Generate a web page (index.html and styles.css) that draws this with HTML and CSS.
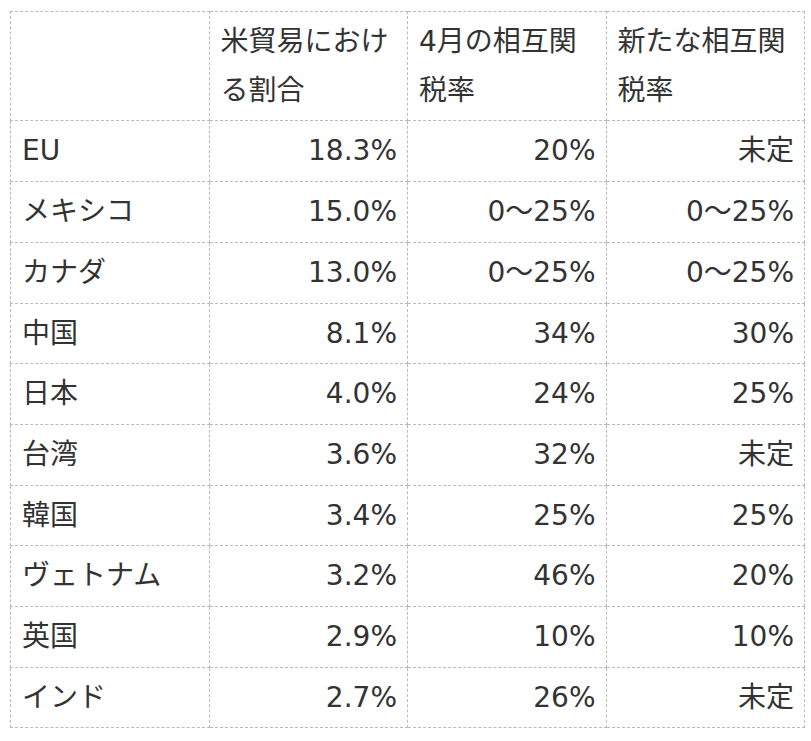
FILE: index.html
```html
<!DOCTYPE html>
<html lang="ja">
<head>
<meta charset="utf-8">
<link rel="stylesheet" href="styles.css">
</head>
<body>
<table class="tariff">
<thead>
<tr><th></th><th>米貿易における割合</th><th>4月の相互関税率</th><th>新たな相互関税率</th></tr>
</thead>
<tbody>
<tr><td>EU</td><td class="num">18.3%</td><td class="num">20%</td><td class="num">未定</td></tr>
<tr><td>メキシコ</td><td class="num">15.0%</td><td class="num">0～25%</td><td class="num">0～25%</td></tr>
<tr><td>カナダ</td><td class="num">13.0%</td><td class="num">0～25%</td><td class="num">0～25%</td></tr>
<tr><td>中国</td><td class="num">8.1%</td><td class="num">34%</td><td class="num">30%</td></tr>
<tr><td>日本</td><td class="num">4.0%</td><td class="num">24%</td><td class="num">25%</td></tr>
<tr><td>台湾</td><td class="num">3.6%</td><td class="num">32%</td><td class="num">未定</td></tr>
<tr><td>韓国</td><td class="num">3.4%</td><td class="num">25%</td><td class="num">25%</td></tr>
<tr><td>ヴェトナム</td><td class="num">3.2%</td><td class="num">46%</td><td class="num">20%</td></tr>
<tr><td>英国</td><td class="num">2.9%</td><td class="num">10%</td><td class="num">10%</td></tr>
<tr><td>インド</td><td class="num">2.7%</td><td class="num">26%</td><td class="num">未定</td></tr>
</tbody>
</table>
</body>
</html>
```
FILE: styles.css
```css
html, body {
  margin: 0;
  padding: 0;
  background: #fff;
}
body {
  padding: 11px 0 0 10px;
  font-family: "DejaVu Sans", "Noto Sans CJK JP", sans-serif;
  color: #333;
}
.tariff {
  border-collapse: collapse;
  table-layout: fixed;
  width: 795px;
  font-size: 28px;
  line-height: 48.7px;
}
.tariff th,
.tariff td {
  border: 1px dashed #bbb;
  padding: 6px 10px 5px 11px;
  width: 25%;
  vertical-align: middle;
}
.tariff th {
  font-weight: normal;
  text-align: left;
}
.tariff td.num {
  text-align: right;
}
```
